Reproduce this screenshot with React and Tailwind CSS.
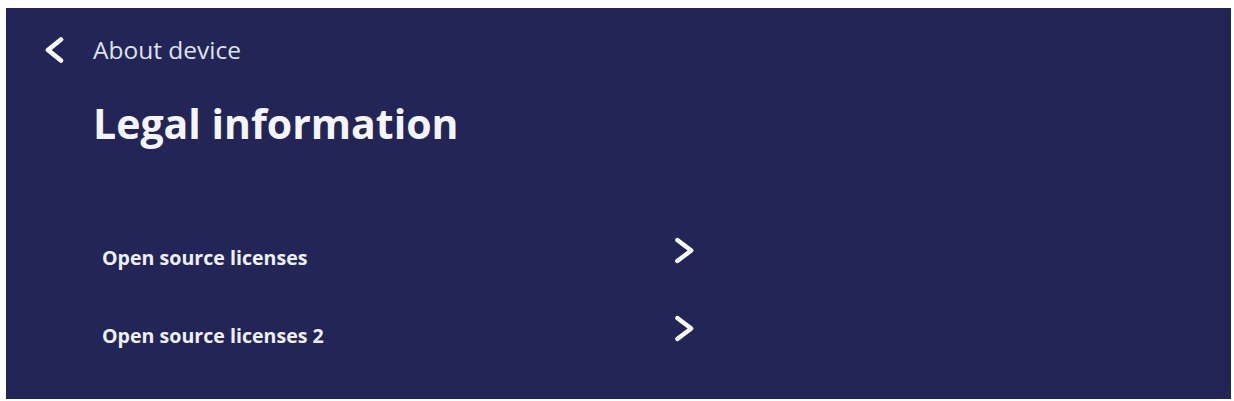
import React from "react";

function ChevronLeft({ className }) {
  return (
    <svg viewBox="0 0 24 28" className={className} fill="none" stroke="currentColor" strokeWidth="4.8" strokeLinecap="round" strokeLinejoin="round">
      <path d="M19 3.5 L6 14 L19 24.5" />
    </svg>
  );
}

function ChevronRight({ className }) {
  return (
    <svg viewBox="0 0 24 28" className={className} fill="none" stroke="currentColor" strokeWidth="4.6" strokeLinecap="round" strokeLinejoin="round">
      <path d="M4.5 3 L19 14 L4.5 25" />
    </svg>
  );
}

function Row({ label }) {
  return (
    <div className="flex h-[78px] items-center">
      <span className="w-[667px] pl-[96px] text-[19.6px] font-bold text-[#eef0f8]">{label}</span>
      <ChevronRight className="mb-[16px] h-[31px] w-[23px] text-white" />
    </div>
  );
}

export default function App() {
  return (
    <div className="h-[401px] w-[1234px] bg-white pl-[6px] pr-[3px] pt-[8px] pb-[2px]" style={{ fontFamily: '"Open Sans", "Noto Sans", sans-serif' }}>
      <div className="flex h-full flex-col bg-[#232556]">
        <div className="flex items-center pt-[27px]">
          <ChevronLeft className="ml-[36px] h-[28px] w-[24px] text-white" />
          <span className="ml-[27px] text-[24.5px] leading-[30px] text-[#dfe1ee]">About device</span>
        </div>
        <h1 className="mt-[32px] pl-[87px] text-[41px] font-bold leading-[52px] text-[#f4f5fa]">Legal information</h1>
        <div className="mt-[70px] flex flex-col">
          <Row label="Open source licenses" />
          <Row label="Open source licenses 2" />
        </div>
      </div>
    </div>
  );
}
